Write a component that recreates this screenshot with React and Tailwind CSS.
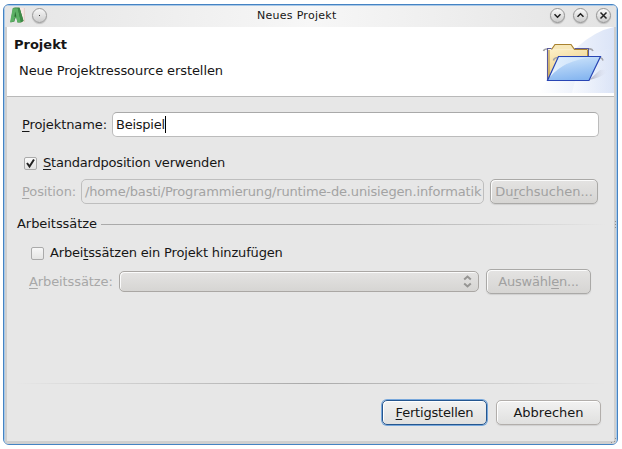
import React from "react";

function WindowButton({ children }) {
  return (
    <span className="flex h-[15px] w-[15px] shrink-0 items-center justify-center rounded-full border border-[#949494] bg-linear-to-b from-[#fafafa] to-[#cbcbcb] shadow-[0_1px_1px_#bbbbbb]">
      <svg width="9" height="9" viewBox="0 0 9 9" fill="none" stroke="#222" strokeWidth="1.500" className="shrink-0">
        {children}
      </svg>
    </span>
  );
}

function AppLogo() {
  return (
    <svg width="16" height="17" viewBox="10 8 16 17" className="shrink-0">
      <path d="M20 9h4v14.500h-4z" fill="#f6e9e6" />
      <path d="M24.300 9v14" stroke="#e5b9b2" strokeWidth=".6" />
      <path d="M13 9l2-.5h4.500l4 13.500-2.500 1.500h-3.500L16.500 19l-1.500.500-.5 3-4 1z" fill="#38803f" />
      <path d="M12.700 9.200h5L21 23.200h-3.700l-1-4.500h-1.600L13.800 22.500l-3.800.8z" fill="#5cb065" />
      <path d="M15.200 12.500l1.200 5.200h-2z" fill="#2c6b35" />
      <path d="M17.700 9l2 .2 3.800 12.500-2.500 1.500z" fill="#3e8a47" />
    </svg>
  );
}

function Folder() {
  return (
    <svg width="75" height="66" viewBox="539 27 75 66" className="shrink-0">
      <defs>
        <linearGradient id="sky" x1="0" x2="1">
          <stop offset="0" stopColor="#fff" />
          <stop offset="1" stopColor="#dbe4f7" />
        </linearGradient>
        <linearGradient id="paper" x1="0" y1="0" x2="0.4" y2="1">
          <stop offset="0" stopColor="#fdf1c8" />
          <stop offset="1" stopColor="#e9c97e" />
        </linearGradient>
        <linearGradient id="flap" x1="0.2" y1="0" x2="0.5" y2="1">
          <stop offset="0" stopColor="#cfe5fb" />
          <stop offset="1" stopColor="#86b6f0" />
        </linearGradient>
        <linearGradient id="shine" x1="0" y1="1" x2="1" y2="0">
          <stop offset="0" stopColor="#fff" stopOpacity=".85" />
          <stop offset="1" stopColor="#e6f3ff" stopOpacity=".3" />
        </linearGradient>
        <linearGradient id="shade" x1="0" x2="1">
          <stop offset="0" stopColor="#a9a9bb" />
          <stop offset="1" stopColor="#dfe3f2" stopOpacity="0" />
        </linearGradient>
      </defs>
      <path d="M539 93Q578 34 614 27V93z" fill="url(#sky)" />
      <path d="M572 93Q580 51 614 48V93z" fill="url(#sky)" opacity=".5" />
      <path d="M589 80L600 70Q611 69 606 73Q600 78 589 80z" fill="url(#shade)" />
      <path d="M548 80V49.500h40.500V57L580 80z" fill="url(#paper)" />
      <path d="M551.500 49.500l3.500-5h16l3.500 5z" fill="#f7e8ba" />
      <path d="M551.500 49.500l3.500-5h16l3.500 5h13" fill="none" stroke="#a98230" strokeWidth="1.200" />
      <path d="M547.500 80V48.500h4M574.500 48.500h14V57" fill="none" stroke="#59599c" strokeWidth="1.100" />
      <path d="M549 78V50M587.500 50V56" fill="none" stroke="#b68f36" />
      <path d="M543.500 51q.5-2 3.500-2M589 49q3-.5 4 2M553.500 60.500q.5-3 5-3M600 57.500q2.500.5 3 3" fill="none" stroke="#a2a2a8" strokeWidth="1.600" />
      <path d="M558.500 56.500H600.500L589 80.500H547.500z" fill="url(#flap)" stroke="#2845b4" strokeWidth="1.200" />
      <path d="M559 57.500H592Q564 60 550 77z" fill="url(#shine)" />
    </svg>
  );
}

function PushButton({ className, children }) {
  return (
    <button
      className={
        "flex shrink-0 items-center justify-center rounded-[5px] border whitespace-nowrap " + className
      }
    >
      <span>{children}</span>
    </button>
  );
}

const disabledButton =
  "border-[#aaa9a7] bg-linear-to-b from-[#e4e3e2] to-[#d6d5d3] text-[#a1a1a1] shadow-[inset_1px_1px_0_#fbfbfb,0_1px_1px_#d0d0d0]";

function Key({ children }) {
  return <span className="underline decoration-1 underline-offset-2">{children}</span>;
}

export default function App() {
  return (
    <div className="relative h-[449px] w-[622px] overflow-hidden bg-white pt-1 pl-[3px] font-['DejaVu_Sans',sans-serif] text-[13px] leading-4 text-[#161616]">
      <div className="h-[441px] w-[615px] overflow-hidden rounded-[6px] border border-[#4583c3] bg-[#e7e7e7]">
        <div className="flex h-[439px] flex-col rounded-t-[5px] border-t border-r border-l border-[#a9c9e8]">
          <div className="flex h-[21px] shrink-0 items-center bg-linear-to-r from-[#e5e5e5] via-[#f7f7f7] to-[#e3e3e3] pr-[6px] pb-[2px] pl-[5px]">
            <AppLogo />
            <span className="ml-[6px] flex h-[15px] w-[15px] items-center justify-center rounded-full border border-[#999] bg-linear-to-b from-[#f7f7f7] to-[#cdcdcd] shadow-[0_1px_1px_#bbbbbb]">
              <span className="h-px w-px bg-[#333]" />
            </span>
            <div className="ml-[210px] w-[100px] text-[11px] tracking-[0.28px] whitespace-nowrap">Neues Projekt</div>
            <div className="-mr-px ml-auto flex gap-2">
              <WindowButton><path d="M1.500 3.200L4.500 6.200L7.500 3.200" /></WindowButton>
              <WindowButton><path d="M1.500 5.700L4.500 2.700L7.500 5.700" /></WindowButton>
              <WindowButton><path d="M1.500 1.500L7.500 7.500M7.500 1.500L1.500 7.500" /></WindowButton>
            </div>
          </div>
          <div className="flex min-h-0 grow flex-col border-r-2 border-b-3 border-l-2 border-[#cfcfcf]">
            <div className="flex h-[70px] shrink-0 justify-between border-b border-[#b9b9b9] bg-white">
              <div className="pt-[10px] pl-[7px]">
                <h1 className="font-bold">Projekt</h1>
                <p className="mt-[10px] ml-[5px] tracking-[-0.09px]">Neue Projektressource erstellen</p>
              </div>
              <Folder />
            </div>

            <div className="mt-[15px] flex h-[25px] shrink-0 items-center pl-[15px]">
              <label className="w-[90px] tracking-[-0.1px] whitespace-nowrap"><Key>P</Key>rojektname:</label>
              <div className="flex h-[25px] w-[487px] items-center rounded-[5px] border border-[#bcbcbc] border-t-[#a9a9a9] bg-white pl-[3px] tracking-[-0.25px]">
                Beispiel<span className="h-[17px] w-px bg-black" />
              </div>
            </div>

            <div className="mt-[18px] flex h-4 shrink-0 items-center pl-[17px]">
              <span className="flex h-[13px] w-[13px] items-center justify-center rounded-[2px] border border-[#aaa] bg-linear-to-b from-[#fafafa] to-[#e2e2e2]">
                <svg width="11" height="11" viewBox="0 0 11 11" className="shrink-0">
                  <path d="M2 5L4.500 8.500L9 1.500" fill="none" stroke="#222" strokeWidth="2" />
                </svg>
              </span>
              <label className="ml-[6px] tracking-[-0.2px]"><Key>S</Key>tandardposition verwenden</label>
            </div>

            <div className="mt-[8px] flex h-[25px] shrink-0 items-center pl-[15px]">
              <label className="w-[59px] tracking-[-0.1px] text-[#a8a8a8]"><Key>P</Key>osition:</label>
              <div className="mr-[6px] flex h-[25px] w-[403px] shrink-0 items-center rounded-[5px] border border-[#bebebe] pl-[3px] tracking-[-0.15px] whitespace-nowrap text-[#a3a3a3]">
                /home/basti/Programmierung/runtime-de.unisiegen.informatik
              </div>
              <PushButton className={disabledButton + " h-[25px] w-[108px]"}>Du<Key>r</Key>chsuchen...</PushButton>
            </div>

            <div className="mt-[12px] flex h-4 shrink-0 items-center pr-[8px] pl-[10px]">
              <span className="w-[84px] tracking-[-0.05px]">Arbeitssätze</span>
              <span className="h-px grow bg-linear-to-r from-[#aaa] from-50% to-[#e7e7e7]" />
            </div>

            <div className="mt-[13px] flex h-4 shrink-0 items-center pl-[24px]">
              <span className="h-[13px] w-[13px] rounded-[2px] border border-[#aaa] bg-linear-to-b from-[#f7f7f7] to-[#e5e5e4]" />
              <label className="ml-[6px] tracking-[-0.16px]">Arbei<Key>t</Key>ssätzen ein Projekt hinzufügen</label>
            </div>

            <div className="mt-[8px] flex h-[25px] shrink-0 items-center pl-[22px]">
              <label className="w-[90px] tracking-[-0.1px] whitespace-nowrap text-[#a8a8a8]"><Key>A</Key>rbeitssätze:</label>
              <div className="mr-[7px] flex h-[21px] w-[360px] items-center justify-end rounded-[5px] border border-[#aaa7a4] bg-linear-to-b from-[#e4e3e2] to-[#d6d5d3] pr-[6px] shadow-[inset_1px_1px_0_#fbfbfb]">
                <svg width="9" height="13" viewBox="0 0 9 13" fill="none" stroke="#969593" strokeWidth="2">
                  <path d="M1.200 4.500L4.500 1.500L7.800 4.500M1.200 8.500L4.500 11.500L7.800 8.500" />
                </svg>
              </div>
              <PushButton className={disabledButton + " h-[25px] w-[105px] tracking-[-0.2px]"}>Auswähl<Key>e</Key>n...</PushButton>
            </div>

            <div className="mx-[8px] mt-[89px] h-px shrink-0 bg-linear-to-r from-[#e7e7e7] via-[#aaa] to-[#e7e7e7]" />
            <div className="mt-[16px] flex shrink-0 justify-end gap-[9px] pr-[13px]">
              <PushButton className="h-[25px] w-[105px] border-[#25568f] bg-linear-to-b from-[#f2f2f2] to-[#e0e0df] tracking-[-0.2px] shadow-[0_0_0_1px_#78a8dc,inset_1px_1px_0_white]"><Key>F</Key>ertigstellen</PushButton>
              <PushButton className="h-[25px] w-[105px] border-[#b2aeab] bg-linear-to-b from-[#f2f2f2] to-[#e0e0df] shadow-[inset_1px_1px_0_white,0_1px_1px_#d0d0d0]">Abbrechen</PushButton>
            </div>
          </div>
        </div>
      </div>
      <svg className="absolute top-[220px] left-[614px]" width="3" height="9" viewBox="0 0 3 9" fill="#8f8f8f">
        <path d="M1 1h1v1H1zM1 4h1v1H1zM1 7h1v1H1z" />
      </svg>
      <svg className="absolute top-[437px] left-[610px]" width="7" height="7" viewBox="0 0 7 7" fill="#8f8f8f">
        <path d="M5 1h1v1H5zM4 4h1v1H4zM1 5h1v1H1z" />
      </svg>
    </div>
  );
}
